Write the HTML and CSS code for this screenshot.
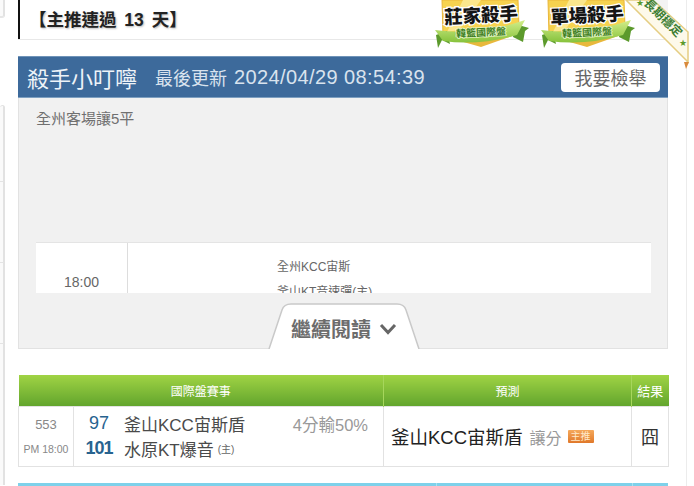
FILE: index.html
```html
<!DOCTYPE html>
<html lang="zh-Hant">
<head>
    <meta charset="UTF-8">
    <title>殺手小叮嚀</title>
    <link rel="stylesheet" href="styles.css">
</head>
<body>
<div class="page">
    <aside class="side">
        <div class="sideCard sideTop"></div>
        <div class="sideCard sideTall"></div>
        <div class="sideCard sideItem"></div>
        <div class="sideCard sideItem"></div>
        <div class="sideCard sideLast"></div>
    </aside>

    <main class="content">
        <div class="streak">【主推連過 13 天】</div>

        <section class="panel">
            <header class="panelHead">
                <h1>殺手小叮嚀</h1>
                <span class="updated">最後更新</span>
                <span class="stamp">2024/04/29 08:54:39</span>
                <button class="report">我要檢舉</button>
            </header>
            <div class="panelBody">
                <p class="note">全州客場讓5平</p>
                <div class="snippet">
                    <div class="snipTime">18:00</div>
                    <div class="snipTeams">
                        <p>全州KCC宙斯</p>
                        <p>釜山KT音速彈(主)</p>
                    </div>
                </div>
            </div>
            <div class="more">
                <svg class="moreTab" width="152" height="46" viewBox="0 0 152 46">
                    <path d="M1 46 L14 7 Q16 1 23 1 L129 1 Q136 1 138 7 L151 46" fill="#fff" stroke="#c9c9c9" stroke-width="1.5"/>
                </svg>
                <span class="moreLabel">繼續閱讀</span>
                <svg class="moreArrow" width="18" height="12" viewBox="0 0 18 12">
                    <path d="M2 2 L9 9.5 L16 2" fill="none" stroke="#666" stroke-width="3"/>
                </svg>
            </div>
        </section>

        <table class="picks">
            <colgroup>
                <col class="colNo"><col class="colGame"><col class="colPick"><col class="colEnd">
            </colgroup>
            <thead>
            <tr><th colspan="2">國際盤賽事</th><th>預測</th><th class="thEnd">結果</th></tr>
            </thead>
            <tbody>
            <tr>
                <td class="tdNo"><div class="gameNo">553</div><div class="gameTime">PM 18:00</div></td>
                <td class="tdGame">
                    <div class="line">
                        <span class="score">97</span><span class="team">釜山KCC宙斯盾</span><span class="spread">4分輸50%</span>
                    </div>
                    <div class="line">
                        <span class="score scoreHome">101</span><span class="team">水原KT爆音</span><small class="home">(主)</small>
                    </div>
                </td>
                <td class="tdPick">
                    <span class="pickTeam">釜山KCC宙斯盾</span><span class="pickType">讓分</span><span class="tag">主推</span>
                </td>
                <td class="tdEnd">囧</td>
            </tr>
            </tbody>
        </table>

        <div class="nextBar"><i></i><i></i></div>
    </main>

    <div class="rail"></div>
</div>

<!-- badges and ribbon sit over the title row -->
<svg class="badge badgeOne" width="96" height="49" viewBox="0 0 96 49">
    <defs>
        <linearGradient id="ribbonGreen" x1="0" y1="0" x2="0" y2="1">
            <stop offset="0" stop-color="#d3ee8a"/>
            <stop offset="1" stop-color="#86c23c"/>
        </linearGradient>
    </defs>
    <path d="M9 0 L85 0 L86 27 L10 36 Z" fill="#f6d24f" stroke="#e9b63a"/>
    <path d="M30 0 L48 0 L26 30 L14 32 Z" fill="#fbe78d"/>
    <path d="M13 37 L48 47 L82 35 L48 30 Z" fill="#e8b83c"/>
    <path d="M3 35 L14 31 L17 44 L9 40 L5 48 Z" fill="#5c9a2c"/>
    <path d="M82 24 L96 28 L92 31 L90 42 L80 37 Z" fill="#5c9a2c"/>
    <path d="M2 30 Q46 36 92 20 L84 35 Q46 46 10 41 Z" fill="url(#ribbonGreen)"/>
    <text class="badgeTitle" x="48" y="22" transform="rotate(-3 48 15)">莊家殺手</text>
    <text class="badgeSub" x="48" y="36" transform="rotate(-3 48 33)">韓籃國際盤</text>
</svg>
<svg class="badge badgeTwo" width="96" height="49" viewBox="0 0 96 49">
    <path d="M9 0 L85 0 L86 27 L10 36 Z" fill="#f6d24f" stroke="#e9b63a"/>
    <path d="M30 0 L48 0 L26 30 L14 32 Z" fill="#fbe78d"/>
    <path d="M13 37 L48 47 L82 35 L48 30 Z" fill="#e8b83c"/>
    <path d="M3 35 L14 31 L17 44 L9 40 L5 48 Z" fill="#5c9a2c"/>
    <path d="M82 24 L96 28 L92 31 L90 42 L80 37 Z" fill="#5c9a2c"/>
    <path d="M2 30 Q46 36 92 20 L84 35 Q46 46 10 41 Z" fill="url(#ribbonGreen)"/>
    <text class="badgeTitle" x="48" y="22" transform="rotate(-3 48 15)">單場殺手</text>
    <text class="badgeSub" x="48" y="36" transform="rotate(-3 48 33)">韓籃國際盤</text>
</svg>
<svg class="ribbon" width="66" height="70" viewBox="0 0 66 70">
    <path d="M29 0 L44 0 L44 18 Z" fill="#f3f3f3"/>
    <path d="M2 0 L29 0 L64 32 L64 62 Z" fill="#fdf9ea" stroke="#e5cd82" stroke-width="1.5"/>
    <path d="M60 62 L65 62 L62 69 Z" fill="#d98a3c"/>
    <text class="ribbonText" x="39" y="22" transform="rotate(45 39 18)">長期穩定</text>
    <text class="ribbonStar" x="59" y="46">★</text>
    <text class="ribbonStar" x="16" y="6">★</text>
</svg>
</body>
</html>
```

FILE: styles.css
```css
* {
    padding: 0;
    margin: 0;
    box-sizing: border-box;
}
html, body {
    height: 486px;
    overflow: hidden;
}
body {
    position: relative;
    background: #fff;
    font-family: "Liberation Sans", "Noto Sans CJK TC", sans-serif;
    color: #333;
}
.page {
    display: flex;
    height: 486px;
}

/* cards of the left column, only the edge is visible */
.side {
    width: 18px;
    flex-shrink: 0;
}
.sideCard {
    width: 5px;
    border-right: 2px solid #e2e2e2;
    background: #fafafa;
}
.sideTop {
    height: 18px;
    border-bottom: 2px solid #e6e6e6;
    border-radius: 0 0 3px 0;
    margin-bottom: 87px;
}
.sideTall {
    height: 77px;
    border-top: 1px solid #e2e2e2;
    border-bottom: 1px solid #e4e4e4;
    border-radius: 3px 3px 0 0;
}
.sideItem {
    height: 81px;
    border-bottom: 1px solid #e4e4e4;
}
.sideLast {
    height: 141px;
}

.content {
    width: 650px;
    flex-shrink: 0;
}
.rail {
    margin-left: 18px;
    width: 1px;
    background: #ececec;
}

.streak {
    height: 39px;
    padding-left: 9px;
    border-left: 2px solid #111;
    box-shadow: 0 1px 0 #e8e8e8;
    font-size: 17.5px;
    font-weight: bold;
    word-spacing: 3px;
    line-height: 40px;
    color: #222;
    text-shadow: 1px 1px 2px #bbb;
}

.panel {
    position: relative;
    height: 293px;
    margin-top: 17px;
    background: #f1f1f1;
    border: 1px solid #e2e2e2;
    border-top: 0;
}
.panelHead {
    display: flex;
    align-items: center;
    height: 42px;
    margin: 0 -1px;
    padding: 0 8px 0 9px;
    background: #3d6a9b;
    border-top: 1px solid #6f93b8;
    border-bottom: 1px solid #7d9fc0;
    color: #d9e3ee;
}
.panelHead h1 {
    font-size: 22px;
    font-weight: normal;
    color: #eef3f8;
    margin-right: 18px;
}
.updated {
    font-size: 18px;
    margin-right: 7px;
}
.stamp {
    font-size: 20px;
    letter-spacing: 0.4px;
}
.report {
    margin-left: auto;
    width: 99px;
    height: 29px;
    background: #fff;
    border: 0;
    border-radius: 4px;
    font-family: inherit;
    font-size: 18px;
    color: #666;
}
.panelBody {
    padding: 0 16px 0 17px;
}
.note {
    margin-top: 11px;
    font-size: 15px;
    line-height: 20px;
    color: #707070;
}
.snippet {
    display: flex;
    height: 51px;
    margin-top: 113px;
    background: #fff;
    border-top: 1px solid #e4e4e4;
    overflow: hidden;
}
.snipTime {
    width: 92px;
    height: 80px;
    padding-top: 30px;
    border-right: 1px solid #ddd;
    text-align: center;
    font-size: 14px;
    line-height: 18px;
    color: #666;
}
.snipTeams {
    padding: 12px 0 0 149px;
    font-size: 12px;
    line-height: 25px;
    color: #666;
}

/* tab overlaps the bottom of the panel */
.more {
    position: absolute;
    left: 249px;
    bottom: -1px;
    display: flex;
    align-items: center;
    justify-content: center;
    gap: 8px;
    width: 152px;
    height: 46px;
    padding-top: 4px;
}
.moreTab {
    position: absolute;
    left: 0;
    top: 0;
}
.moreLabel {
    position: relative;
    font-size: 20px;
    font-weight: bold;
    color: #6c6c6c;
}
.moreArrow {
    position: relative;
    top: 1px;
}

.picks {
    width: 650px;
    margin-top: 26px;
    border-collapse: collapse;
    table-layout: fixed;
}
.colNo { width: 55px; }
.colGame { width: 310px; }
.colPick { width: 248px; }
.colEnd { width: 37px; }
.picks th {
    height: 31px;
    background: linear-gradient(#a0d344, #62a52d);
    border-left: 1px solid #a6d65c;
    border-right: 1px solid #a6d65c;
    font-size: 12px;
    font-weight: normal;
    color: #fff;
}
.picks th:first-child {
    border-left: 0;
}
.picks th.thEnd {
    font-size: 13px;
    border-right: 0;
}
.picks td {
    height: 60px;
    border: 1px solid #e2e2e2;
    vertical-align: middle;
}
.tdNo {
    text-align: center;
    color: #888;
}
.gameNo {
    margin-top: 1px;
    font-size: 13px;
    line-height: 24px;
}
.gameTime {
    font-size: 10.5px;
    line-height: 24px;
}
.line {
    display: flex;
    align-items: center;
    height: 25px;
    padding-right: 15px;
}
.score {
    width: 50px;
    text-align: center;
    font-size: 18px;
    color: #27638f;
}
.scoreHome {
    font-weight: bold;
    letter-spacing: -1px;
}
.team {
    font-size: 17px;
    color: #4a4a4a;
}
.spread {
    margin-left: auto;
    font-size: 16.5px;
    color: #999;
}
.home {
    margin-left: 4px;
    font-size: 10px;
    color: #666;
}
.tdPick {
    padding: 0 0 1px 7px;
    white-space: nowrap;
}
.pickTeam {
    font-size: 18.5px;
    color: #222;
}
.pickType {
    margin: 0 6px 0 7px;
    font-size: 16px;
    color: #999;
}
.tag {
    display: inline-block;
    width: 26px;
    height: 13px;
    background: linear-gradient(#f5a95c, #e0782a);
    border-radius: 1px;
    vertical-align: 4px;
    text-align: center;
    font-size: 10px;
    line-height: 13px;
    color: #ffe9c9;
}
.tdEnd {
    padding-bottom: 1px;
    text-align: center;
    font-size: 18px;
    color: #333;
}

.nextBar {
    display: flex;
    height: 3px;
    margin-top: 16px;
    background: #7ed1ea;
}
.nextBar i {
    border-left: 1px solid #a9e2f2;
}
.nextBar i:nth-child(1) { margin-left: 418px; }
.nextBar i:nth-child(2) { margin-left: 195px; }

.badge {
    position: absolute;
    top: 0;
}
.badgeOne { left: 433px; }
.badgeTwo { left: 539px; }
.badgeTitle {
    font-family: "Noto Sans CJK TC", sans-serif;
    font-size: 18.5px;
    font-weight: 900;
    text-anchor: middle;
    fill: #151515;
    stroke: #fff;
    stroke-width: 2.5px;
    paint-order: stroke;
}
.badgeSub {
    font-family: "Noto Sans CJK TC", sans-serif;
    font-size: 10px;
    font-weight: bold;
    text-anchor: middle;
    fill: #3f7f22;
    stroke: #e8f6c8;
    stroke-width: 1.5px;
    paint-order: stroke;
}
.ribbon {
    position: absolute;
    left: 624px;
    top: 0;
}
.ribbonText {
    font-family: "Noto Sans CJK TC", sans-serif;
    font-size: 12px;
    font-weight: bold;
    text-anchor: middle;
    fill: #3d7f35;
}
.ribbonStar {
    font-family: "DejaVu Sans", sans-serif;
    font-size: 9px;
    text-anchor: middle;
    fill: #5c9a2c;
}
```
